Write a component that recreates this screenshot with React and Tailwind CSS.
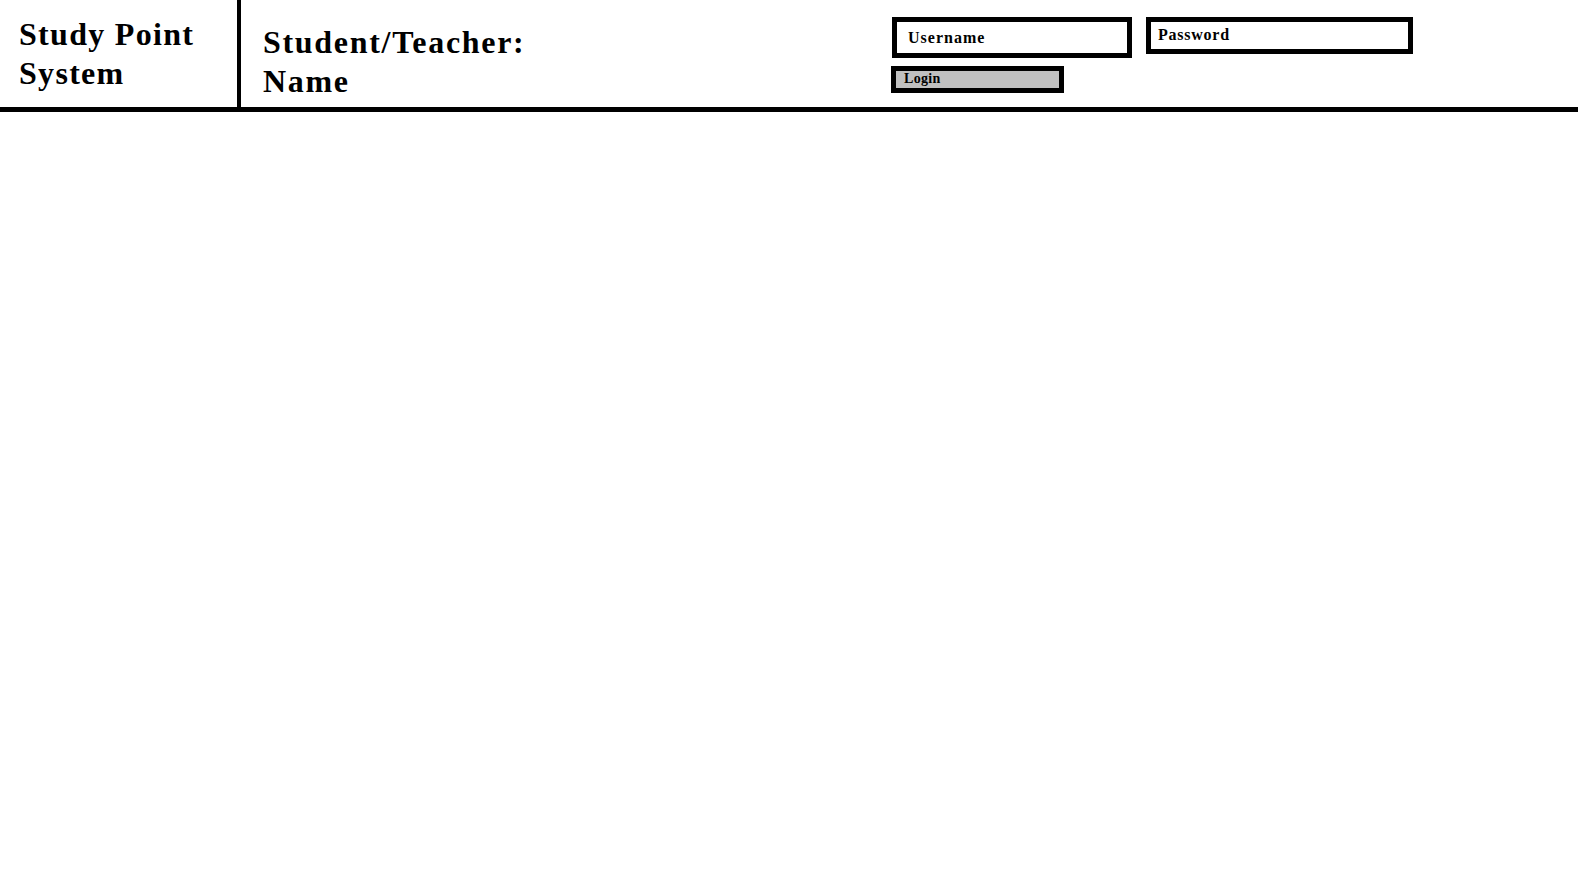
import React from 'react';

const serif = { fontFamily: '"Liberation Serif", "Times New Roman", serif' };

function LoginForm() {
  return (
    <div className="pt-[17px] text-black">
      <div className="flex items-start">
        <div className="w-[240px] h-[41px] border-[5px] border-black pl-[11px] pt-[8px]">
          <span className="block text-[16px] leading-[16px] font-bold tracking-[1px]">Username</span>
        </div>
        <div className="ml-[14px] w-[267px] h-[37px] border-[5px] border-black pl-[7px] pt-[5px]">
          <span className="block text-[16px] leading-[16px] font-bold tracking-[0.75px]">Password</span>
        </div>
      </div>
      <div className="-ml-px mt-[8px] w-[173px] h-[27px] border-[5px] border-black bg-[#c0c0c0] pl-[8px]">
        <span className="block text-[14px] leading-[15px] font-bold tracking-[0.3px]">Login</span>
      </div>
    </div>
  );
}

export default function App() {
  return (
    <div className="min-h-screen bg-white text-black" style={serif}>
      <header className="flex h-[112px] border-b-[5px] border-black">
        <div className="w-[241px] shrink-0 border-r-4 border-black pl-[19px] pt-[15px]">
          <h1 className="text-[32px] leading-[39px] font-bold tracking-[1.3px]">
            Study Point
            <br />
            System
          </h1>
        </div>
        <div className="w-[651px] shrink-0 pl-[22px] pt-[23px]">
          <h2 className="text-[32px] leading-[39px] font-bold tracking-[1.7px]">
            Student/Teacher:
            <br />
            Name
          </h2>
        </div>
        <LoginForm />
      </header>
    </div>
  );
}
